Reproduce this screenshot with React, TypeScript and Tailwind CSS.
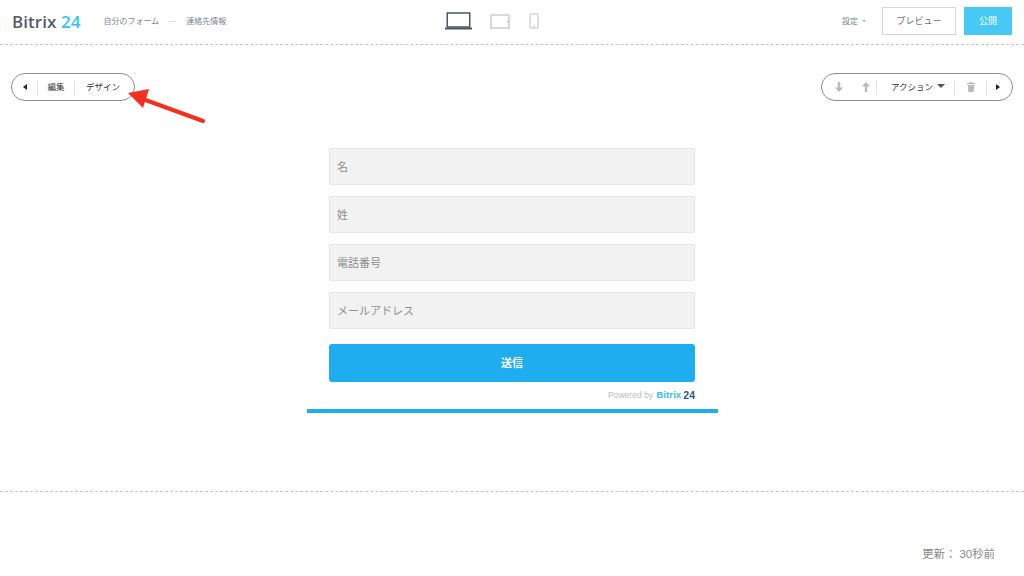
const font = "font-['Noto_Sans_CJK_JP','Noto_Sans_CJK_SC',sans-serif]";
const fields = ["名", "姓", "電話番号", "メールアドレス"];

function Caret({ dir }: { dir: "left" | "right" }) {
  return (
    <svg width="4" height="6" viewBox="0 0 4 6" className="fill-[#222]">
      <path d={dir === "left" ? "M4 0v6L0 3z" : "M0 0v6l4-3z"} />
    </svg>
  );
}

function Sep() {
  return <span className="h-[15px] w-px bg-[#e3e3e3]" />;
}

function Arrow({ up }: { up?: boolean }) {
  return (
    <svg width="8" height="10" viewBox="0 0 8 10" className={up ? "fill-[#b8bbc0]" : "rotate-180 fill-[#b8bbc0]"}>
      <path d="M4 0 8 4.6H5.2V10H2.8V4.6H0z" />
    </svg>
  );
}

function Trash() {
  return (
    <svg width="8" height="10" viewBox="0 0 8 10" className="fill-[#b8bbc0]">
      <path d="M0 1h2.8V0h2.4v1H8v1.2H0zM.8 3h6.4l-.5 7H1.3z" />
    </svg>
  );
}

function Devices() {
  return (
    <div className="mr-[41px] flex items-center">
      <svg width="27" height="18" viewBox="0 0 27 18" fill="none" className="mr-[18px]">
        <rect x="2.25" y="1" width="22.5" height="14" stroke="#4c5666" strokeWidth="1.5" />
        <rect x="0" y="15.5" width="27" height="2" fill="#4c5666" />
      </svg>
      <svg width="20" height="15" viewBox="0 0 20 15" fill="none" className="mr-[19px]">
        <rect x="1" y="1" width="18" height="13" stroke="#d3d5d8" strokeWidth="1.8" />
        <rect x="17" y="6" width="2" height="3" fill="#d3d5d8" />
      </svg>
      <svg width="10" height="16" viewBox="0 0 10 16" fill="none">
        <rect x="1" y="1" width="8" height="14" rx="1.2" stroke="#d3d5d8" strokeWidth="1.5" />
        <rect x="3.5" y="12.5" width="3" height="1.2" fill="#d3d5d8" />
      </svg>
    </div>
  );
}

export default function App() {
  return (
    <div className={`relative flex h-[576px] w-[1024px] flex-col overflow-hidden bg-white ${font}`}>
      {/* Header */}
      <header className="grid h-[45px] grid-cols-[1fr_auto_1fr] items-center border-b border-dashed border-[#c4c4c4] pb-[2px]">
        <div className="flex items-center pl-3">
          <span className="font-['Open_Sans',sans-serif] text-[17px] font-semibold leading-none tracking-[0.05px] text-[#535c69]">
            Bitrix <span className="text-[#2fc6f6]">24</span>
          </span>
          <span className="ml-[23px] text-[8px] text-[#80868e]">自分のフォーム</span>
          <span className="mx-[10px] text-[8px] text-[#c4c7cb]">—</span>
          <span className="text-[8px] text-[#80868e]">連絡先情報</span>
        </div>
        <Devices />
        <div className="flex items-center justify-end pr-3">
          <span className="text-[8px] text-[#80868e]">設定</span>
          <span className="ml-1 mr-[16px] h-0 w-0 border-x-[2px] border-t-[2px] border-x-transparent border-t-[#b0b4ba]" />
          <button className="flex h-[28px] w-[74px] items-center justify-center border border-[#d5d7db] text-[9px] text-[#6b7280]">
            プレビュー
          </button>
          <button className="ml-2 flex h-[28px] w-[48px] items-center justify-center bg-[#47c8f5] text-[9px] text-white">
            公開
          </button>
        </div>
      </header>

      {/* Block toolbars */}
      <div className="flex justify-between px-[11px] pt-[28px]">
        <div className="flex h-[28px] w-[124px] items-center rounded-full border border-[#8a8f96] text-[8.5px] leading-[10px] text-[#333]">
          <span className="flex w-[25px] justify-center">
            <Caret dir="left" />
          </span>
          <Sep />
          <span className="mb-[2px] w-[36px] text-center">編集</span>
          <Sep />
          <span className="mb-[2px] pl-[11px]">デザイン</span>
        </div>
        <div className="flex h-[28px] w-[192px] items-center rounded-full border border-[#8a8f96] text-[8.5px] leading-[10px] text-[#333]">
          <span className="flex w-[34px] justify-center">
            <Arrow />
          </span>
          <span className="flex w-[20px] justify-center">
            <Arrow up />
          </span>
          <Sep />
          <span className="mb-[2px] flex w-[77px] items-center gap-1 pl-[14px]">
            アクション
            <span className="h-0 w-0 border-x-[4px] border-t-[4px] border-x-transparent border-t-[#555]" />
          </span>
          <Sep />
          <span className="flex w-[31px] justify-center">
            <Trash />
          </span>
          <Sep />
          <span className="flex flex-1 justify-center pr-1">
            <Caret dir="right" />
          </span>
        </div>
      </div>

      {/* Form block */}
      <main className="mt-[47px] flex h-[344px] w-[1024px] flex-col items-center border-b border-dashed border-[#c4c4c4]">
        <div className="flex w-[366px] flex-col gap-[11px]">
          {fields.map((f) => (
            <div
              key={f}
              className="flex h-[37px] items-center rounded-[2px] border border-[#e6e6e6] bg-[#f2f2f2] px-[7px] text-[11px] text-[#8f8f8f]"
            >
              {f}
            </div>
          ))}
        </div>
        <button className="mt-[15px] flex h-[38px] w-[366px] items-center justify-center rounded-[3px] bg-[#1eaeef] pb-[2px] text-[11px] font-bold text-white">
          送信
        </button>
        <div className="mt-[7px] flex h-[13px] w-[366px] items-center justify-end font-['Liberation_Sans',sans-serif] text-[8.6px] text-[#b9bcc1]">
          Powered by
          <span className="ml-[3px] text-[9.8px] font-bold text-[#3bbdf0]">Bitrix</span>
          <span className="ml-[2px] text-[10.5px] font-bold text-[#2b5a80]">24</span>
        </div>
        <div className="mt-[7px] h-[4px] w-[411px] bg-[#1eaeef]" />
      </main>

      {/* Footer */}
      <footer className="flex justify-end pr-[29px] pt-[54px] text-[11.4px] text-[#8a8a8a]">
        <span className="font-['Liberation_Sans','Noto_Sans_CJK_JP',sans-serif] leading-[16px]">更新： 30秒前</span>
      </footer>

      {/* Annotation arrow */}
      <svg width="90" height="45" viewBox="0 0 90 45" className="absolute left-[122px] top-[84px]">
        <path d="M81 37 L18 14" stroke="#f42f1e" strokeWidth="4" strokeLinecap="round" />
        <path d="M6 9 L27 5 L21 24 Z" fill="#f42f1e" />
      </svg>
    </div>
  );
}
